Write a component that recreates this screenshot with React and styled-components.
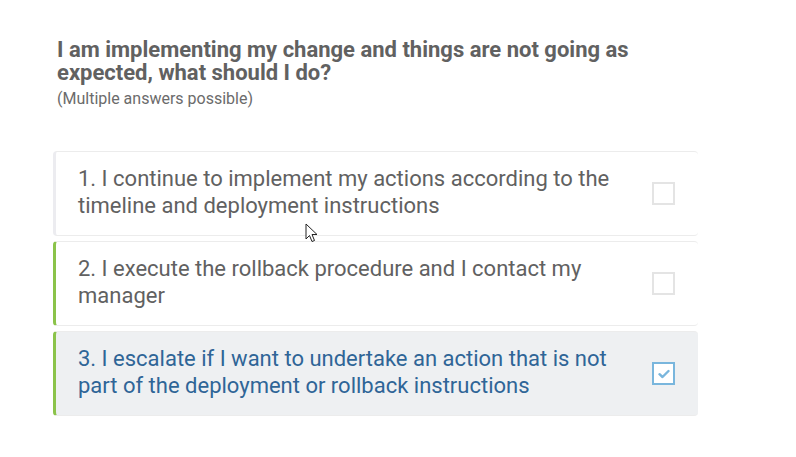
import React from 'react'
import styled, { createGlobalStyle } from 'styled-components'

const GlobalStyle = createGlobalStyle`
  body {
    margin: 0;
    background: #ffffff;
    font-family: Roboto, "Liberation Sans", sans-serif;
  }
`

const Page = styled.div`
  position: relative;
  width: 796px;
  height: 457px;
  padding: 38px 0 0 53px;
  box-sizing: border-box;
`

const Header = styled.div`
  padding-left: 4px;
  margin-bottom: 41px;
`

const Title = styled.h2`
  margin: 0;
  width: 620px;
  font-size: 22px;
  line-height: 23px;
  font-weight: 700;
  color: #616161;
`

const Hint = styled.div`
  margin-top: 4px;
  font-size: 16px;
  line-height: 22px;
  color: #6b6b6b;
`

const List = styled.div`
  width: 645px;
  display: flex;
  flex-direction: column;
  gap: 5px;
`

const Option = styled.label`
  display: flex;
  align-items: center;
  min-height: 85px;
  box-sizing: border-box;
  padding: 12px 23px 12px 22px;
  border: 1px solid #ececec;
  border-right: none;
  border-left: 3px solid ${p => (p.$accent ? '#8bc34a' : '#ececf0')};
  border-radius: 4px;
  background: ${p => (p.$checked ? '#eef0f2' : '#ffffff')};
  cursor: pointer;
`

const Text = styled.span`
  flex: 1;
  padding-right: 20px;
  margin-bottom: 4px;
  font-size: 22px;
  line-height: 27px;
  color: ${p => (p.$checked ? '#2f6597' : '#616161')};
`

const Box = styled.span`
  width: 23px;
  height: 23px;
  box-sizing: border-box;
  border: 2px solid ${p => (p.$checked ? '#79b6dd' : '#e4e4e4')};
  background: #ffffff;
  display: flex;
  align-items: center;
  justify-content: center;
`

const Cursor = styled.svg`
  position: absolute;
  left: 305px;
  top: 223px;
  pointer-events: none;
`

const answers = [
  { text: '1. I continue to implement my actions according to the timeline and deployment instructions' },
  { text: '2. I execute the rollback procedure and I contact my manager', accent: true },
  { text: '3. I escalate if I want to undertake an action that is not part of the deployment or rollback instructions', accent: true, checked: true },
]

const Check = () => (
  <svg width="12" height="10" viewBox="0 0 12 10">
    <path d="M1.5 5.2 L4.5 8 L10.5 2" fill="none" stroke="#79b6dd" strokeWidth="2.4" strokeLinecap="round" strokeLinejoin="round" />
  </svg>
)

const App = () => (
  <Page>
    <GlobalStyle />
    <Header>
      <Title>I am implementing my change and things are not going as expected, what should I do?</Title>
      <Hint>(Multiple answers possible)</Hint>
    </Header>
    <List>
      {answers.map(a => (
        <Option key={a.text} $accent={a.accent} $checked={a.checked}>
          <Text $checked={a.checked}>{a.text}</Text>
          <Box $checked={a.checked}>{a.checked && <Check />}</Box>
        </Option>
      ))}
    </List>
    <Cursor width="13" height="20" viewBox="0 0 13 20">
      <path d="M1 1 L1 16 L4.5 12.5 L7 18.5 L9.5 17.5 L7 11.5 L12 11.5 Z" fill="#ffffff" stroke="#222" strokeWidth="1" strokeLinejoin="round" />
    </Cursor>
  </Page>
)

export default App
